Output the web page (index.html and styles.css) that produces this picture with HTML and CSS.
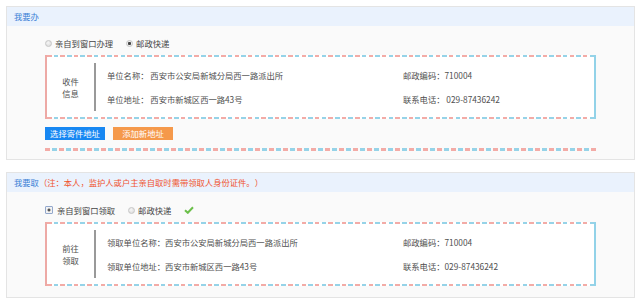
FILE: index.html
```html
<!DOCTYPE html>
<html lang="zh-CN">
<head>
    <meta charset="UTF-8">
    <meta name="viewport" content="width=device-width, initial-scale=1.0">
    <title>我要办 / 我要取</title>
    <link rel="stylesheet" href="styles.css">
</head>
<body>
    <div class="page">
        <section class="panel">
            <div class="panel-head">我要办</div>
            <div class="panel-body">
                <div class="radios">
                    <label class="radio"><span class="dot"></span>亲自到窗口办理</label>
                    <label class="radio on"><span class="dot"></span>邮政快递</label>
                </div>
                <div class="addr">
                    <div class="addr-title">收件<br>信息</div>
                    <div class="addr-info">
                        <span>单位名称： 西安市公安局新城分局西一路派出所</span>
                        <span>邮政编码：710004</span>
                        <span>单位地址： 西安市新城区西一路43号</span>
                        <span>联系电话： 029-87436242</span>
                    </div>
                </div>
                <div class="actions">
                    <button class="btn btn-blue">选择寄件地址</button>
                    <button class="btn btn-orange">添加新地址</button>
                </div>
                <div class="divider"></div>
            </div>
        </section>

        <section class="panel panel-pick">
            <div class="panel-head">我要取<span class="note">（注：本人，监护人或户主亲自取时需带领取人身份证件。）</span></div>
            <div class="panel-body">
                <div class="radios">
                    <label class="radio on focus"><span class="dot"></span>亲自到窗口领取</label>
                    <label class="radio"><span class="dot"></span>邮政快递</label>
                    <svg class="check" width="10" height="8" viewBox="0 0 10 8">
                        <path d="M1 4.2 L3.8 6.8 L9 1.2" fill="none" stroke="#6bbf4a" stroke-width="2"/>
                    </svg>
                </div>
                <div class="addr">
                    <div class="addr-title">前往<br>领取</div>
                    <div class="addr-info">
                        <span>领取单位名称：西安市公安局新城分局西一路派出所</span>
                        <span>邮政编码：710004</span>
                        <span>领取单位地址：西安市新城区西一路43号</span>
                        <span>联系电话：029-87436242</span>
                    </div>
                </div>
            </div>
        </section>
    </div>
</body>
</html>
```

FILE: styles.css
```css
body {
    margin: 0;
    background-color: #fff;
    font-family: "Noto Sans CJK SC", "Noto Sans", sans-serif;
    font-size: 8.3px;
    color: #505050;
    text-spacing-trim: space-all;
}
.page {
    padding: 6px 5px 0 6px;
}
.panel {
    border: 1px solid #e4e4e4;
    background-color: #fafafa;
}
.panel-pick {
    margin-top: 12px;
}
.panel-head {
    height: 19px;
    line-height: 19px;
    padding-left: 7px;
    background-color: #eaf2fd;
    color: #3a7fd6;
}
.panel-head .note {
    color: #f0522f;
}
.panel-body {
    padding: 11px 38px 8px 38px;
}
.panel-pick .panel-body {
    padding-top: 12px;
    padding-bottom: 11px;
}
.radios {
    display: flex;
    align-items: center;
    height: 12px;
    margin-bottom: 6px;
    color: #444;
}
.radio {
    display: flex;
    align-items: center;
    margin-right: 13px;
}
.radio .dot {
    width: 5px;
    height: 5px;
    margin-right: 3px;
    border: 1px solid #c6c6c6;
    border-radius: 50%;
    background: radial-gradient(circle at 40% 35%, #f6f6f6, #d6d6d6);
}
.radio.on .dot {
    background: radial-gradient(circle, #444 0 1.3px, #eee 1.8px);
}
.radio.focus .dot {
    width: 6px;
    height: 6px;
    border-radius: 1px;
    border-color: #93a8cc;
    background: radial-gradient(circle, #555 0 1.2px, #f2f2f2 1.8px);
    margin-right: 4px;
}
.addr {
    display: flex;
    padding: 8px 0;
    border-left: 2px solid #eda9a5;
    border-right: 2px solid #92d2e8;
    background-color: #fff;
    background-image:
        repeating-linear-gradient(90deg, #f3aba6 0 4.5px, transparent 4.5px 6.7px, #95d3e8 6.7px 11.2px, transparent 11.2px 13.4px),
        repeating-linear-gradient(90deg, #f3aba6 0 4.5px, transparent 4.5px 6.7px, #95d3e8 6.7px 11.2px, transparent 11.2px 13.4px);
    background-size: 100% 2px, 100% 2px;
    background-position: top left, bottom left;
    background-repeat: no-repeat;
}
.addr-title {
    width: 47px;
    display: flex;
    align-items: center;
    justify-content: center;
    text-align: center;
    line-height: 12px;
    border-right: 2px solid #999;
}
.addr-info {
    display: grid;
    grid-template-columns: 296px auto;
    grid-auto-rows: 24px;
    align-items: center;
    padding-left: 11px;
}
.actions {
    display: flex;
    gap: 8px;
    margin-top: 8px;
}
.btn {
    height: 13px;
    line-height: 13px;
    width: 60px;
    padding: 0;
    border: none;
    border-radius: 0;
    font-family: inherit;
    font-size: 8.3px;
    color: #fff;
    cursor: pointer;
}
.btn-blue {
    background-color: #1787f2;
}
.btn-orange {
    background-color: #f5994b;
}
.divider {
    height: 3px;
    margin-top: 8px;
    margin-right: -1px;
    background-image: repeating-linear-gradient(90deg, #f3aba6 0 5px, transparent 5px 7px, #95d3e8 7px 12px, transparent 12px 14px);
}
```
